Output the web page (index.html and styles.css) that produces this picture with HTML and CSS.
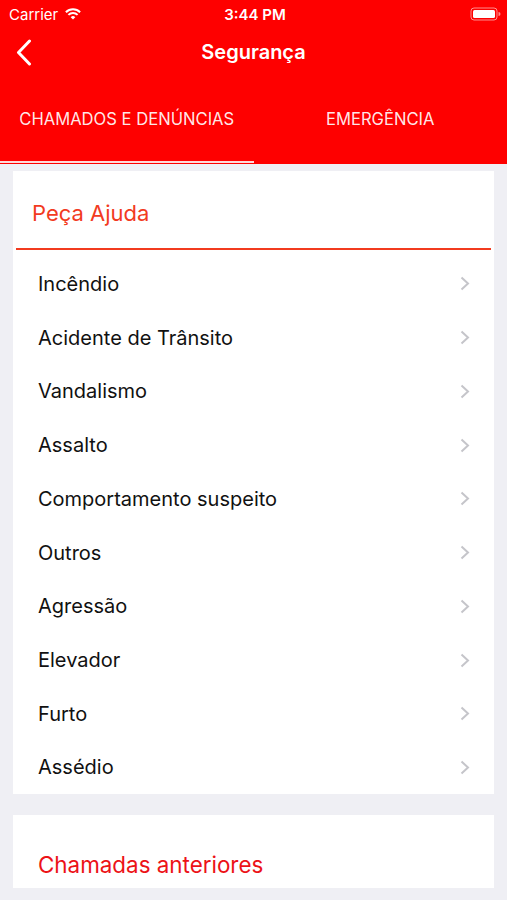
FILE: index.html
```html
<!DOCTYPE html>
<html lang="pt-BR">
<head>
    <meta charset="UTF-8">
    <meta name="viewport" content="width=device-width, initial-scale=1.0">
    <title>Segurança</title>
    <link rel="stylesheet" href="styles.css">
</head>
<body>
    <header class="topbar">
        <!-- Status bar -->
        <div class="status-bar">
            <div class="status-left">
                <span>Carrier</span>
                <svg class="wifi" width="16" height="13" viewBox="0 0 16 13">
                    <path d="M8 12.6 L5.7 10.3 A3.2 3.2 0 0 1 10.3 10.3 Z" fill="#fff"/>
                    <path d="M3.4 7.9 A6.5 6.5 0 0 1 12.6 7.9" fill="none" stroke="#fff" stroke-width="2"/>
                    <path d="M0.9 5.3 A10 10 0 0 1 15.1 5.3" fill="none" stroke="#fff" stroke-width="2"/>
                </svg>
            </div>
            <div class="status-time">3:44 PM</div>
            <div class="status-right">
                <svg width="31" height="14" viewBox="0 0 31 14">
                    <rect x="1" y="1" width="26" height="12" rx="3" fill="none" stroke="rgba(255,255,255,0.55)" stroke-width="1"/>
                    <rect x="3" y="3" width="22" height="8" rx="1.5" fill="#fff"/>
                    <path d="M28.5 5 A2 2 0 0 1 28.5 9 Z" fill="rgba(255,255,255,0.55)"/>
                </svg>
            </div>
        </div>

        <!-- Navigation -->
        <nav class="navbar">
            <button class="back-btn" aria-label="Voltar">
                <svg width="16" height="27" viewBox="0 0 16 27">
                    <polyline points="13.5,2 2.5,13.5 13.5,25" fill="none" stroke="#fff" stroke-width="3" stroke-linecap="round" stroke-linejoin="round"/>
                </svg>
            </button>
            <h1 class="nav-title">Segurança</h1>
        </nav>

        <!-- Tabs -->
        <div class="tabs">
            <div class="tab active">
                <span class="tab-label">CHAMADOS E DENÚNCIAS</span>
                <span class="tab-indicator"></span>
            </div>
            <div class="tab">
                <span class="tab-label">EMERGÊNCIA</span>
                <span class="tab-indicator"></span>
            </div>
        </div>
    </header>

    <main class="content">
        <section class="card">
            <h2 class="card-title">Peça Ajuda</h2>
            <div class="card-divider"></div>
            <ul class="help-list" id="help-list"></ul>
        </section>

        <section class="card card-history">
            <h2 class="history-title">Chamadas anteriores</h2>
        </section>
    </main>

    <script>
        // Build the list of help categories
        const categories = [
            'Incêndio',
            'Acidente de Trânsito',
            'Vandalismo',
            'Assalto',
            'Comportamento suspeito',
            'Outros',
            'Agressão',
            'Elevador',
            'Furto',
            'Assédio'
        ];

        const helpList = document.getElementById('help-list');

        categories.forEach(function (name) {
            const item = document.createElement('li');
            item.classList.add('help-item');
            item.innerHTML = `
                <span>${name}</span>
                <svg class="chevron" width="10" height="15" viewBox="0 0 10 15">
                    <polyline points="1.5,1.5 8,7.5 1.5,13.5" fill="none" stroke="#c5c5ca" stroke-width="2"/>
                </svg>
            `;
            helpList.appendChild(item);
        });
    </script>
</body>
</html>
```

FILE: styles.css
```css
/* Base */
body {
    margin: 0;
    padding: 0;
    background-color: #efeff4;
    font-family: Inter, "Liberation Sans", Arial, sans-serif;
    color: #111;
}

/* Red header block */
.topbar {
    background-color: #fe0000;
    color: #fff;
}

.status-bar {
    height: 28px;
    display: flex;
    align-items: center;
    justify-content: space-between;
    padding: 0 6px 0 9px;
    font-size: 15px;
    position: relative;
}

.status-left {
    display: flex;
    align-items: center;
    gap: 7px;
    width: 120px;
}

.status-left .wifi {
    margin-top: -2px;
}

.status-time {
    font-weight: 600;
}

.status-right {
    width: 120px;
    display: flex;
    justify-content: flex-end;
}

.navbar {
    height: 48px;
    display: flex;
    align-items: center;
    justify-content: center;
    position: relative;
}

.back-btn {
    position: absolute;
    left: 16px;
    top: 11px;
    background: none;
    border: none;
    padding: 0;
    display: flex;
}

.nav-title {
    margin: 0;
    font-size: 20px;
    font-weight: 600;
}

.tabs {
    display: flex;
    height: 88px;
}

.tab {
    flex: 1;
    display: flex;
    flex-direction: column;
}

.tab-label {
    flex: 1;
    display: flex;
    align-items: center;
    justify-content: center;
    font-size: 16.6px;
    color: rgba(255, 255, 255, 0.92);
}

.tab-indicator {
    height: 2px;
    margin-bottom: 1px;
}

.tab.active .tab-indicator {
    background-color: rgba(255, 255, 255, 0.85);
}

/* Cards */
.content {
    padding: 7px 13px 0;
}

.card {
    background-color: #fff;
}

.card-title {
    margin: 0;
    height: 77px;
    display: flex;
    align-items: center;
    padding: 6px 0 0 19px;
    box-sizing: border-box;
    font-size: 22px;
    font-weight: 400;
    color: #f23b1f;
}

.card-divider {
    height: 2px;
    margin: 0 3px;
    background-color: #f23b1f;
}

.help-list {
    list-style: none;
    margin: 0;
    padding: 7px 0 0;
}

.help-item {
    height: 53.74px;
    display: flex;
    align-items: center;
    justify-content: space-between;
    padding: 0 24px 0 25px;
    font-size: 20px;
}

.card-history {
    margin-top: 21px;
    height: 73px;
}

.history-title {
    margin: 0;
    padding: 36px 0 0 25px;
    font-size: 22.4px;
    font-weight: 400;
    color: #ec1217;
}
```
